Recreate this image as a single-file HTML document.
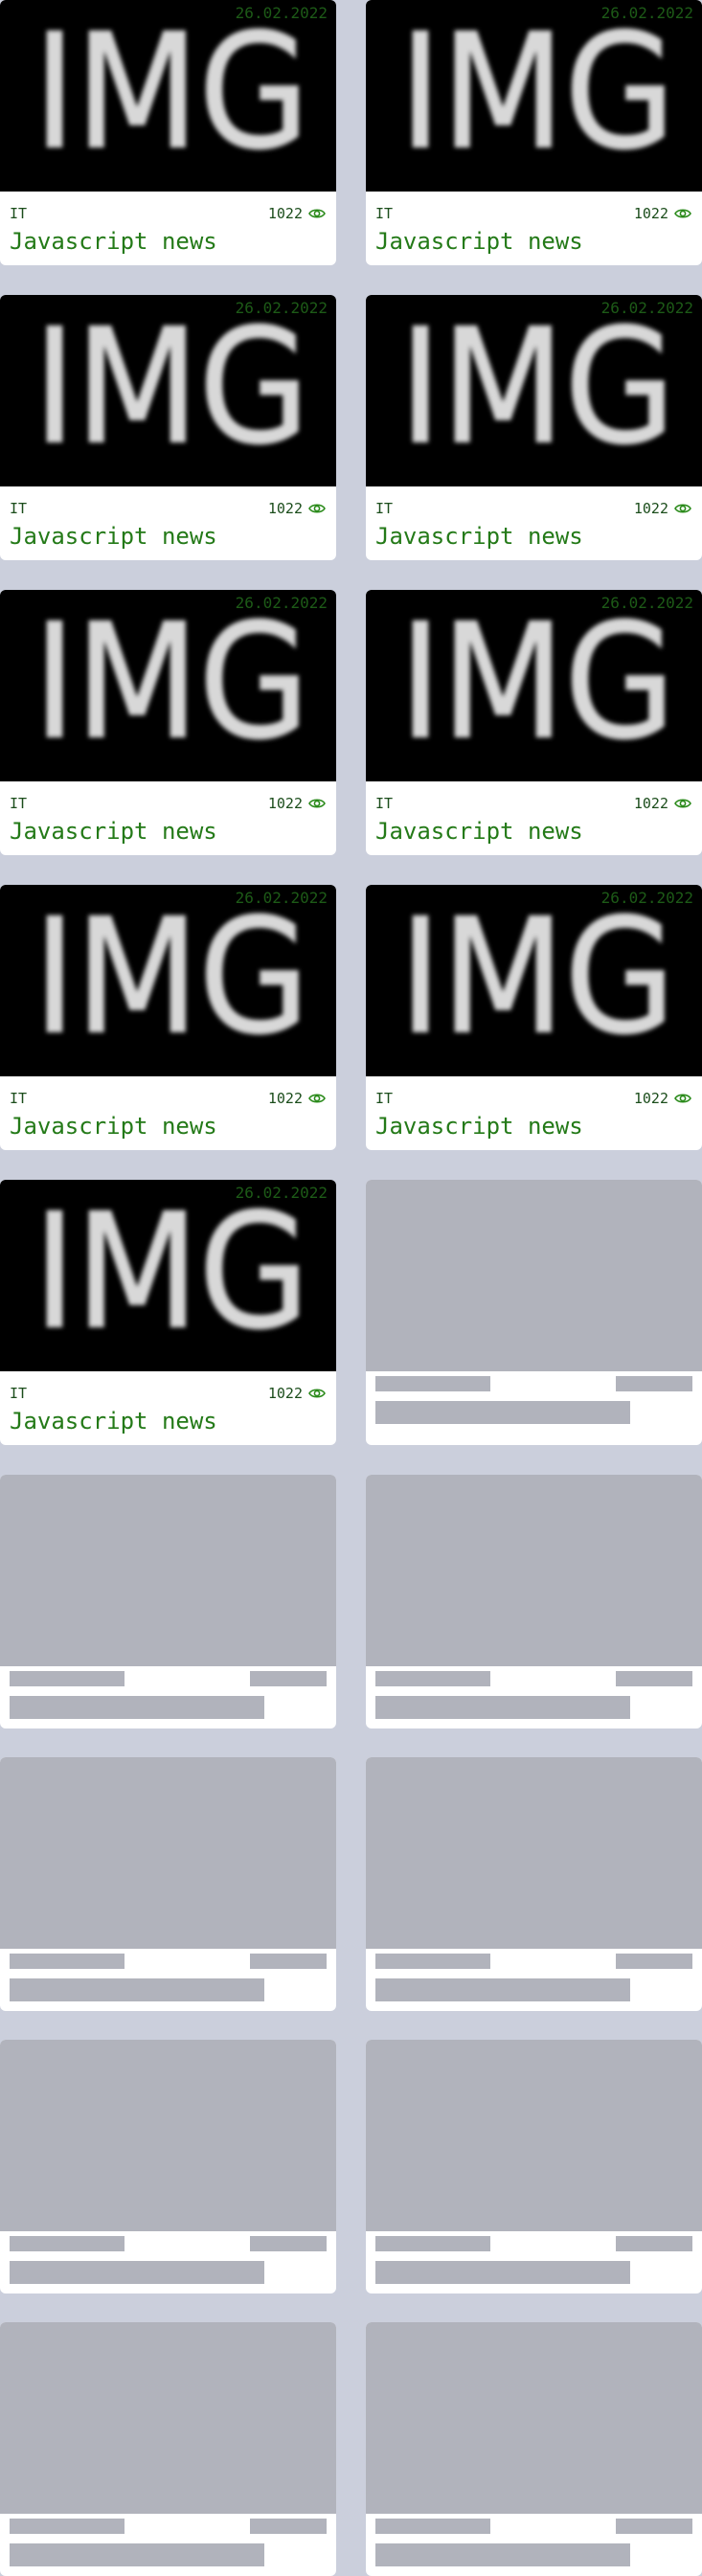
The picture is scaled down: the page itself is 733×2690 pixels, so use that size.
<!DOCTYPE html>
<html><head><meta charset="utf-8"><style>
*{margin:0;padding:0;box-sizing:border-box}
html,body{width:733px;height:2690px;overflow:hidden;background:#cbcfdc;font-family:"DejaVu Sans Mono","Liberation Mono",monospace}
.card{position:absolute;width:351px;background:#fff;border-radius:6px;overflow:hidden}
.c0{left:0}.c1{left:382px}
.real{height:277px}
.img{position:absolute;left:0;top:0;width:100%;height:200px;background:#000}
.img svg{position:absolute;left:0;top:0;filter:blur(2.4px)}
.date{position:absolute;right:9px;top:5px;font-size:16px;color:#1d5a17;line-height:18px}
.cat{position:absolute;left:10px;top:214px;font-size:15px;color:#1b4d1b;line-height:18px}
.views{position:absolute;right:11px;top:214px;font-size:15px;color:#1b4d1b;line-height:18px;display:flex;align-items:center}
.views svg{margin-left:6px}
.title{position:absolute;left:10px;top:238px;font-size:24px;color:#247a18;line-height:28px;white-space:nowrap}
.sk{height:265px}
.sk .im{position:absolute;left:0;top:0;width:100%;height:200px;background:#b1b3bc}
.b{position:absolute;background:#b1b3bc}
</style></head><body>
<div id="wrap"></div>
<script>
var html='';
function real(x,y){
return '<div class="card real '+x+'" style="top:'+y+'px"><div class="img"><svg width="351" height="200"><text x="35" y="153" font-family="DejaVu Sans, sans-serif" font-size="165" fill="#d8d8d8" stroke="#d8d8d8" stroke-width="2" textLength="288" lengthAdjust="spacingAndGlyphs">IMG</text></svg><div class="date">26.02.2022</div></div><div class="cat">IT</div><div class="views">1022<svg width="18" height="12" viewBox="0 0 18 12"><path d="M1 6C4 1 14 1 17 6C14 11 4 11 1 6Z" fill="none" stroke="#2a8a1a" stroke-width="1.6"/><circle cx="9" cy="6" r="2.6" fill="none" stroke="#2a8a1a" stroke-width="1.6"/></svg></div><div class="title">Javascript news</div></div>';
}
function sk(x,y,h){
return '<div class="card sk '+x+'" style="top:'+y+'px;height:'+h+'px"><div class="im"></div><div class="b" style="left:10px;top:205px;width:120px;height:16px"></div><div class="b" style="right:10px;top:205px;width:80px;height:16px"></div><div class="b" style="left:10px;top:231px;width:266px;height:24px"></div></div>';
}
[0,308,616,924].forEach(function(y){html+=real('c0',y)+real('c1',y);});
html+=real('c0',1232)+sk('c1',1232,277);
[1540,1835,2130,2425].forEach(function(y){html+=sk('c0',y,265)+sk('c1',y,265);});
document.getElementById('wrap').innerHTML=html;
</script>
</body></html>
